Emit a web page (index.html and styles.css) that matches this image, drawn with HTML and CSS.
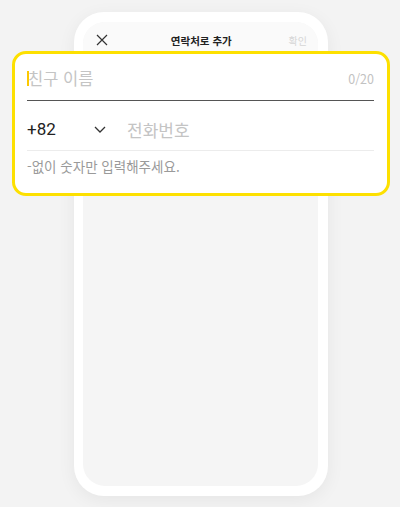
FILE: index.html
```html
<!DOCTYPE html>
<html lang="ko">
<head>
<meta charset="utf-8">
<link rel="stylesheet" href="styles.css">
</head>
<body>
<div class="stage">
  <div class="phone">
    <div class="screen">
      <div class="header">
        <svg class="close" width="12" height="12" viewBox="0 0 12 12"><path d="M1 1L11 11M11 1L1 11" stroke="#333" stroke-width="1.2" fill="none"/></svg>
        <span class="title">연락처로 추가</span>
        <span class="ok">확인</span>
      </div>
    </div>
  </div>
  <div class="card">
    <div class="name-row">
      <span class="cursor"></span>
      <span class="ph name">친구 이름</span>
      <span class="count">0/20</span>
    </div>
    <div class="phone-row">
      <span class="code">+82</span>
      <svg class="chev" width="12" height="7" viewBox="0 0 12 7"><path d="M1 1L6 6L11 1" stroke="#333" stroke-width="1.3" fill="none"/></svg>
      <span class="ph tel">전화번호</span>
    </div>
    <div class="hint">-없이 숫자만 입력해주세요.</div>
  </div>
</div>
</body>
</html>
```
FILE: styles.css
```css
* { box-sizing: border-box; }
html, body { margin: 0; padding: 0; }
body {
  background: #f3f3f3;
  font-family: "Noto Sans CJK KR", "Noto Sans", Roboto, sans-serif;
  width: 400px;
  height: 507px;
  overflow: hidden;
}
.stage {
  position: relative;
  width: 400px;
  height: 507px;
  padding: 12px 0 0 74px;
}
.phone {
  width: 254px;
  height: 484px;
  background: #fff;
  border-radius: 30px;
  padding: 10px 10px 10px 9px;
  box-shadow: 0 4px 18px rgba(0,0,0,0.06);
}
.screen {
  height: 100%;
  background: #f5f5f5;
  border-radius: 22px;
  overflow: hidden;
}
.header {
  height: 36px;
  background: #fafafa;
  display: flex;
  align-items: center;
  justify-content: space-between;
  padding: 0 11px 0 13px;
}
.close { display: block; }
.title {
  font-size: 10.5px;
  font-weight: 700;
  color: #222;
  margin-left: 6px;
}
.ok {
  font-size: 10px;
  color: #d6d6d6;
}
.card {
  position: absolute;
  left: 12px;
  top: 51px;
  width: 378px;
  height: 145px;
  background: #fff;
  border: 3px solid #fde000;
  border-radius: 14px;
  padding: 0 13px 0 12px;
}
.name-row {
  display: flex;
  align-items: center;
  height: 47px;
  border-bottom: 1.5px solid #555;
  padding-top: 2px;
}
.cursor {
  width: 2px;
  height: 15px;
  background: #fcc800;
  margin-right: -1px;
}
.ph {
  color: #c4c4c4;
}
.name {
  font-size: 16.5px;
  flex: 1;
}
.count {
  font-size: 12.5px;
  color: #c2c2c2;
}
.phone-row {
  display: flex;
  align-items: center;
  height: 50px;
  border-bottom: 1px solid #ececec;
  padding-top: 7px;
}
.code {
  font-family: Roboto, "Noto Sans", sans-serif;
  font-size: 17px;
  color: #222;
  width: 67px;
}
.chev { margin-right: 21px; }
.tel { font-size: 17px; }
.hint {
  font-size: 13.5px;
  color: #9a9a9a;
  padding-top: 5px;
}
```
